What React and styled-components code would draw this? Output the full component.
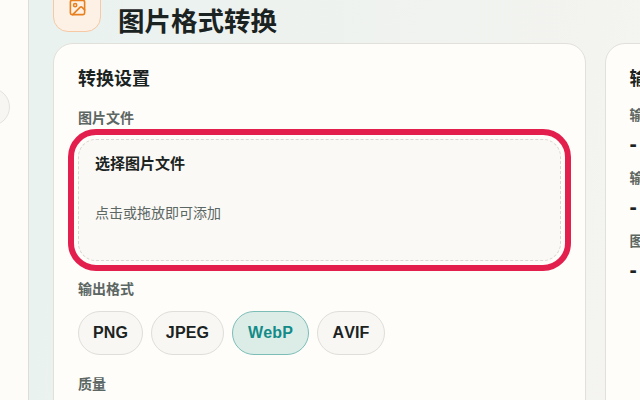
import React from 'react';
import styled, { createGlobalStyle } from 'styled-components';

const Global = createGlobalStyle`
  html, body { margin: 0; padding: 0; width: 640px; height: 400px; overflow: hidden; background: #fefcf8; }
  #root { width: 640px; height: 400px; overflow: hidden; }
  * { box-sizing: border-box; }
`;

const Page = styled.div`
  display: flex;
  width: 640px;
  height: 400px;
  overflow: hidden;
  font-family: "Liberation Sans", "Noto Sans CJK SC", sans-serif;
  color: #1b2322;
`;

const Sidebar = styled.aside`
  flex: 0 0 29px;
  background: #fefcf8;
  border-right: 1px solid #dedcd6;
  padding-top: 88px;
  overflow: hidden;
`;

const RoundButton = styled.div`
  width: 38px;
  height: 38px;
  margin-left: -28px;
  border-radius: 50%;
  background: #f7f6f2;
  border: 1px solid #e4e2dc;
`;

const Main = styled.main`
  flex: 1;
  min-width: 0;
  padding: 0 0 0 24px;
  background: linear-gradient(100deg, #e9f2ef 0%, #edf2ef 35%, #f5f4f0 100%);
  overflow: hidden;
`;

const Header = styled.header`
  display: flex;
  align-items: flex-end;
  gap: 17px;
  height: 43px;
`;

const IconTile = styled.div`
  flex: 0 0 48px;
  width: 48px;
  height: 48px;
  margin-bottom: 11.5px;
  border-radius: 15px;
  background: #fdf0e4;
  border: 1px solid #f6c9a4;
  display: flex;
  align-items: center;
  justify-content: center;
  color: #e8801f;
`;

const Title = styled.h1`
  margin: 0 0 2px;
  font-size: 26.5px;
  line-height: 38px;
  font-weight: 700;
  color: #1b2322;
`;

const Columns = styled.div`
  display: flex;
  gap: 19px;
  align-items: flex-start;
`;

const Card = styled.section`
  flex: 0 0 ${p => p.$width}px;
  width: ${p => p.$width}px;
  height: 500px;
  background: #fefdf9;
  border: 1px solid #e2e0da;
  border-radius: 20px;
  padding: 24px;
`;

const CardTitle = styled.h2`
  margin: 0 0 ${p => p.$gap}px;
  font-size: 18px;
  line-height: 22px;
  font-weight: 700;
  white-space: nowrap;
`;

const FieldLabel = styled.div`
  font-size: 14px;
  line-height: 18px;
  font-weight: 600;
  color: #5c6663;
  white-space: nowrap;
`;

const DropZone = styled.div`
  height: 122px;
  margin-top: 12px;
  margin-bottom: 19px;
  padding: 14px 16px;
  border: 1px dashed #d9d7d1;
  border-radius: 18px;
  background: #faf9f5;
  outline: 6px solid #e31f4d;
  outline-offset: 4px;
`;

const DropTitle = styled.div`
  font-size: 15px;
  line-height: 20px;
  font-weight: 700;
  color: #1b2322;
`;

const DropHint = styled.div`
  margin-top: 29px;
  font-size: 14px;
  line-height: 20px;
  color: #5c6663;
`;

const Chips = styled.div`
  display: flex;
  gap: 8px;
  margin: 13px 0 20px;
`;

const Chip = styled.div`
  flex: 0 0 ${p => p.$width}px;
  height: 44px;
  display: flex;
  align-items: center;
  justify-content: center;
  border-radius: 22px;
  font-size: 16px;
  font-weight: 700;
  font-kerning: none;
  letter-spacing: 0.15px;
  border: 1px solid ${p => (p.$active ? '#7dbdb7' : '#e0ded8')};
  background: ${p => (p.$active ? '#dcede8' : '#f8f7f3')};
  color: ${p => (p.$active ? '#128b89' : '#1b2322')};
`;

const StatLabel = styled(FieldLabel)`
  margin-bottom: 9px;
`;

const StatValue = styled.div`
  font-size: 22px;
  line-height: 22px;
  font-weight: 700;
  margin-bottom: 14px;
`;

export default function App() {
  return (
    <Page>
      <Global />
      <Sidebar><RoundButton /></Sidebar>
      <Main>
        <Header>
          <IconTile>
            <svg width="19" height="19" viewBox="0 0 24 24" fill="none" stroke="currentColor" strokeWidth="2" strokeLinecap="round" strokeLinejoin="round">
              <rect x="3" y="3" width="18" height="18" rx="2" />
              <circle cx="9" cy="9" r="2" />
              <path d="m21 15-3.086-3.086a2 2 0 0 0-2.828 0L6 21" />
            </svg>
          </IconTile>
          <Title>图片格式转换</Title>
        </Header>
        <Columns>
          <Card $width={532.5}>
            <CardTitle $gap={19}>转换设置</CardTitle>
            <FieldLabel>图片文件</FieldLabel>
            <DropZone>
              <DropTitle>选择图片文件</DropTitle>
              <DropHint>点击或拖放即可添加</DropHint>
            </DropZone>
            <FieldLabel>输出格式</FieldLabel>
            <Chips>
              <Chip $width={65}>PNG</Chip>
              <Chip $width={73}>JPEG</Chip>
              <Chip $width={77} $active>WebP</Chip>
              <Chip $width={68}>AVIF</Chip>
            </Chips>
            <FieldLabel>质量</FieldLabel>
          </Card>
          <Card $width={300}>
            <CardTitle $gap={16}>输出信息</CardTitle>
            <StatLabel>输入大小</StatLabel>
            <StatValue>-</StatValue>
            <StatLabel>输出大小</StatLabel>
            <StatValue>-</StatValue>
            <StatLabel>图片尺寸</StatLabel>
            <StatValue>-</StatValue>
          </Card>
        </Columns>
      </Main>
    </Page>
  );
}
